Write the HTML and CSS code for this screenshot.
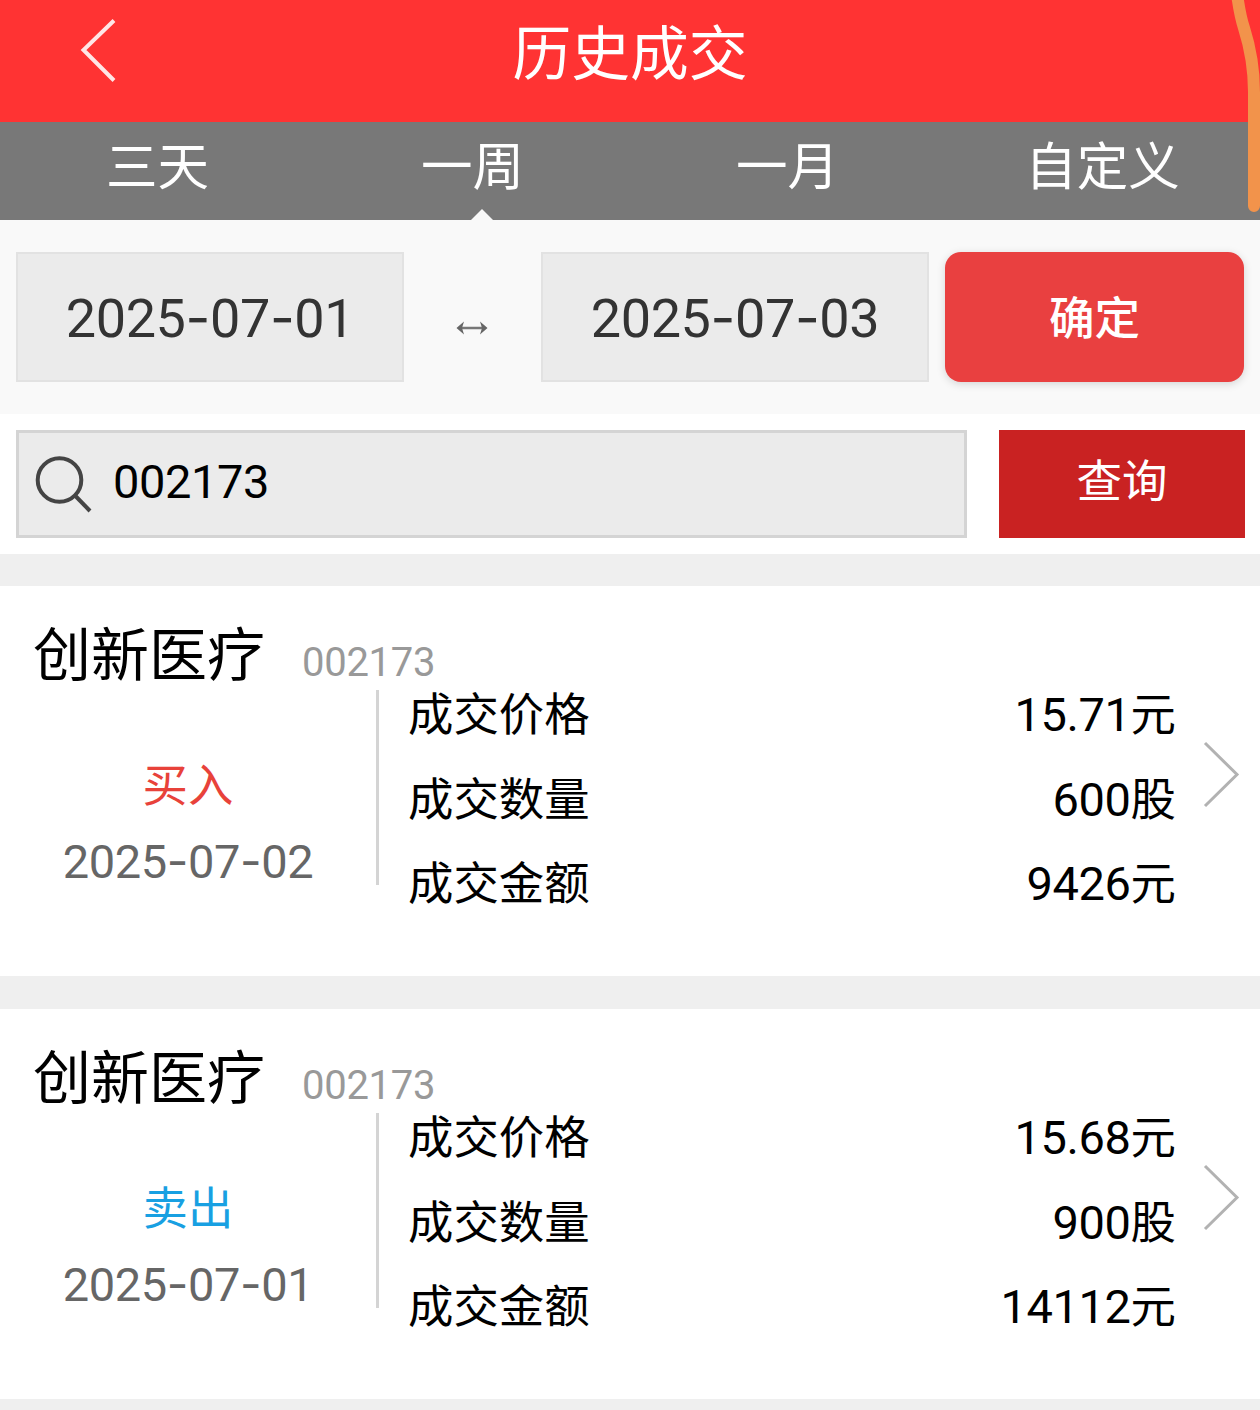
FILE: index.html
```html
<!DOCTYPE html>
<html lang="zh-CN">
<head>
  <meta charset="UTF-8" />
  <meta name="viewport" content="width=device-width, initial-scale=1.0" />
  <title>历史成交</title>
  <link rel="stylesheet" href="styles.css">
</head>
<body>
  <header class="header">
    <svg class="back" viewBox="0 0 40 66" width="40" height="66">
      <path d="M35 3.5 L4.5 33 L35 63.5" />
    </svg>
    <h1>历史成交</h1>
  </header>

  <nav class="tabs">
    <a class="tab">三天</a>
    <a class="tab active">一周</a>
    <a class="tab">一月</a>
    <a class="tab">自定义</a>
  </nav>

  <div class="date-bar">
    <div class="date-input num">2025<i>-</i>07<i>-</i>01</div>
    <svg class="arrow" viewBox="0 0 32 16" width="32" height="16">
      <path class="line" d="M3 8 H29" />
      <path class="head" d="M0.5 8 L8 1.5 L6 8 L8 14.5 Z M31.5 8 L24 1.5 L26 8 L24 14.5 Z" />
    </svg>
    <div class="date-input num">2025<i>-</i>07<i>-</i>03</div>
    <button class="btn-ok">确定</button>
  </div>

  <div class="search-bar">
    <div class="search-input">
      <svg viewBox="0 0 58 58" width="58" height="58">
        <circle cx="25.5" cy="25" r="21.8" />
        <path d="M41 40.5 L56 56" />
      </svg>
      <span class="num">002173</span>
    </div>
    <button class="btn-search">查询</button>
  </div>

  <main class="list">
    <section class="card">
      <div class="card-title">
        <span class="name">创新医疗</span>
        <span class="code num">002173</span>
      </div>
      <div class="card-body">
        <div class="side">
          <div class="type buy">买入</div>
          <div class="date num">2025<i>-</i>07<i>-</i>02</div>
        </div>
        <div class="details">
          <div class="row"><span>成交价格</span><span><span class="num">15.71</span>元</span></div>
          <div class="row"><span>成交数量</span><span><span class="num">600</span>股</span></div>
          <div class="row"><span>成交金额</span><span><span class="num">9426</span>元</span></div>
        </div>
        <svg class="more" viewBox="0 0 38 68" width="38" height="68">
          <path d="M3 3 L35 34.5 L3 66" />
        </svg>
      </div>
    </section>

    <section class="card">
      <div class="card-title">
        <span class="name">创新医疗</span>
        <span class="code num">002173</span>
      </div>
      <div class="card-body">
        <div class="side">
          <div class="type sell">卖出</div>
          <div class="date num">2025<i>-</i>07<i>-</i>01</div>
        </div>
        <div class="details">
          <div class="row"><span>成交价格</span><span><span class="num">15.68</span>元</span></div>
          <div class="row"><span>成交数量</span><span><span class="num">900</span>股</span></div>
          <div class="row"><span>成交金额</span><span><span class="num">14112</span>元</span></div>
        </div>
        <svg class="more" viewBox="0 0 38 68" width="38" height="68">
          <path d="M3 3 L35 34.5 L3 66" />
        </svg>
      </div>
    </section>
  </main>

  <!-- pen stroke over the right edge -->
  <svg class="stroke" viewBox="0 0 40 220" width="40" height="220">
    <path d="M17 -6 C19 8 20 16 24 28 C31 50 34 70 34 92 V206" />
  </svg>
</body>
</html>
```

FILE: styles.css
```css
* {
  box-sizing: border-box;
  margin: 0;
  padding: 0;
}

body {
  position: relative;
  width: 1260px;
  height: 1410px;
  overflow: hidden;
  background-color: #efefef;
  color: #000;
  font-family: "Noto Sans CJK SC", sans-serif;
  font-size: 45.4px;
}

svg {
  display: block;
  fill: none;
  flex: none;
}

button {
  border: none;
  color: #fff;
  font-family: inherit;
  font-size: 45.5px;
}

.num {
  font-family: Roboto, "Noto Sans CJK SC", sans-serif;
  font-size: 47px;
  letter-spacing: -0.4px;
}

.num i {
  font-family: Inter, sans-serif;
  font-style: normal;
}

.header {
  display: grid;
  grid-template-columns: 120px 1fr 120px;
  height: 122px;
  background-color: #ff3333;
  color: #fff;
}

.back {
  margin: 17px 0 0 79px;
  stroke: #ffe6e6;
  stroke-width: 4;
}

.header h1 {
  font-size: 58.8px;
  font-weight: 400;
  line-height: 99px;
  text-align: center;
}

.tabs {
  display: grid;
  grid-template-columns: repeat(4, 1fr);
  height: 98px;
  background-color: #787878;
  color: #fff;
}

.tab {
  position: relative;
  font-size: 51.5px;
  line-height: 82px;
  text-align: center;
}

.tab.active::after {
  content: "";
  position: absolute;
  left: 156px;
  bottom: 0;
  border: 11px solid transparent;
  border-top: none;
  border-bottom-color: #f9f9f9;
}

.date-bar {
  display: flex;
  height: 194px;
  padding: 32px 16px;
  background-color: #f9f9f9;
}

.date-input {
  width: 388px;
  height: 130px;
  border: 2px solid #e2e2e2;
  background-color: #ebebeb;
  color: #333;
  font-size: 54px;
  line-height: 127px;
  text-align: center;
}

.arrow {
  margin: 68px 53px 0 52px;
}

.arrow .line {
  stroke: #777;
  stroke-width: 2.5;
}

.arrow .head {
  fill: #666;
}

.btn-ok {
  width: 299px;
  height: 130px;
  margin-left: 16px;
  padding-bottom: 4px;
  border-radius: 16px;
  background-color: #e94040;
  box-shadow: 0 2px 8px rgba(0, 0, 0, 0.15);
  font-weight: 500;
}

.search-bar {
  display: flex;
  justify-content: space-between;
  height: 140px;
  padding: 16px 15px 16px 16px;
  background-color: #fff;
}

.search-input {
  display: flex;
  width: 951px;
  padding: 20px 0 0 15px;
  border: 3px solid #d4d4d4;
  background-color: #ebebeb;
}

.search-input svg {
  margin-top: 2px;
  stroke: #444;
  stroke-width: 4;
}

.search-input .num {
  margin-left: 21px;
  line-height: 58px;
}

.btn-search {
  width: 246px;
  padding-bottom: 12px;
  background-color: #c92222;
}

.list {
  padding-top: 32px;
}

.card {
  height: 390px;
  margin-bottom: 33px;
  background-color: #fff;
}

.card-title {
  display: flex;
  align-items: baseline;
  height: 104px;
  padding-left: 33px;
}

.name {
  font-size: 58px;
  line-height: 130px;
}

.code {
  margin-left: 37px;
  color: #999;
  font-size: 40px;
  letter-spacing: -0.3px;
}

.card-body {
  display: flex;
}

.side {
  width: 379px;
  height: 195px;
  padding-top: 51px;
  border-right: 3px solid #d4d4d4;
  text-align: center;
}

.type {
  height: 80px;
  line-height: 82px;
}

.buy {
  color: #e8423a;
}

.sell {
  color: #18a0e2;
}

.date {
  color: #666;
  line-height: 79px;
}

.details {
  flex: 1;
  padding: 0 26px 0 29px;
  margin-top: -21px;
}

.row {
  display: flex;
  justify-content: space-between;
  height: 84.5px;
  line-height: 85px;
}

.more {
  margin: 50px 20px 0 0;
  stroke: #b2b2b2;
  stroke-width: 3;
}

.stroke {
  position: absolute;
  top: 0;
  right: 0;
  stroke: #f2934b;
  stroke-width: 12;
  stroke-linecap: round;
}
```
